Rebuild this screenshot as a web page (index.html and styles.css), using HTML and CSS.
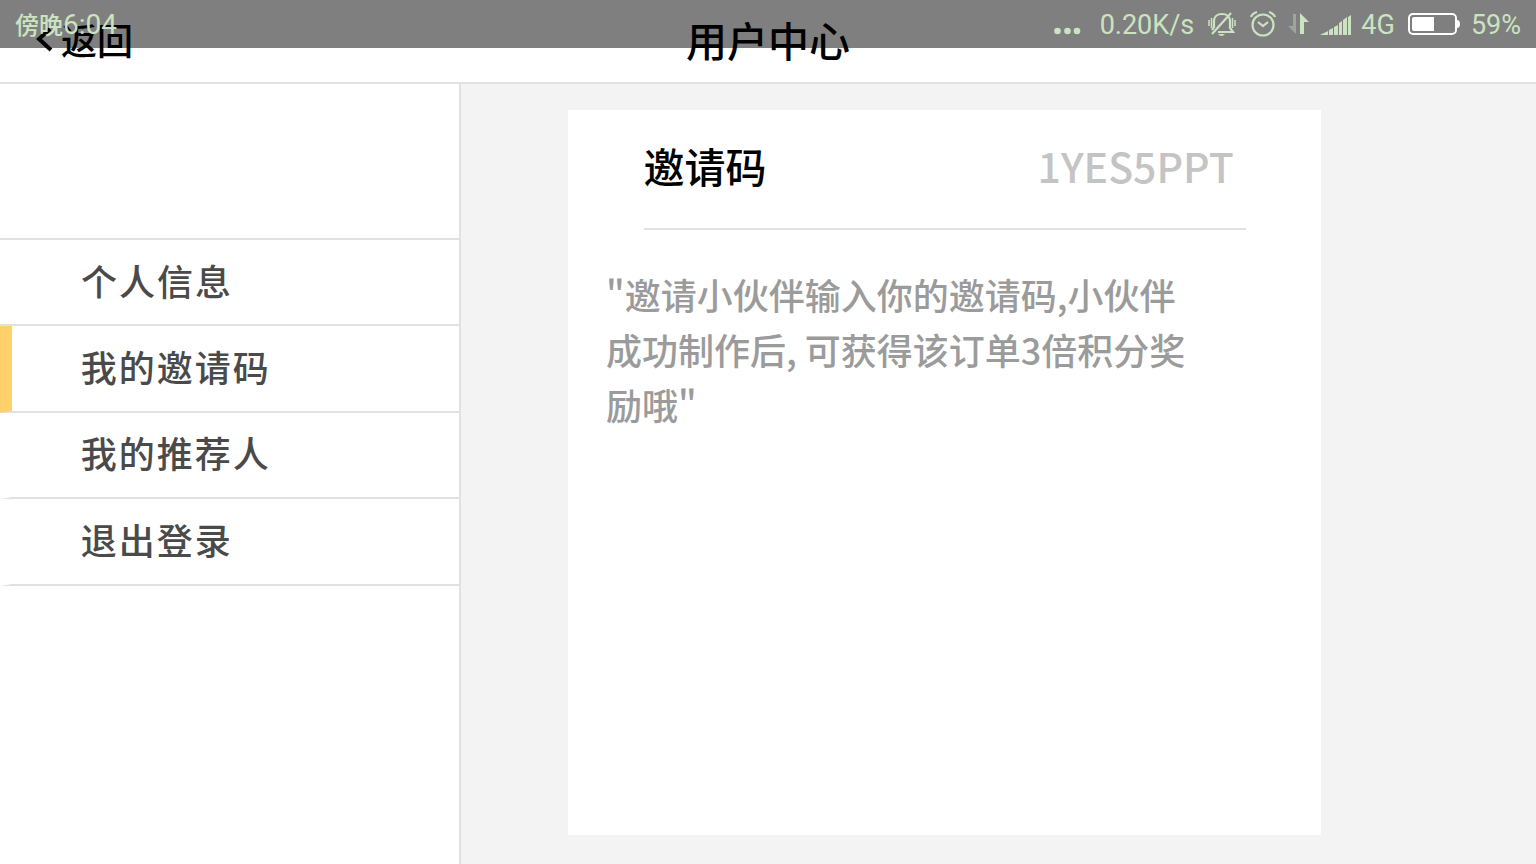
FILE: index.html
```html
<!DOCTYPE html>
<html lang="zh-CN">
<head>
<meta charset="utf-8">
<meta name="viewport" content="width=device-width, initial-scale=1">
<title>用户中心</title>
<link rel="stylesheet" href="styles.css">
</head>
<body class="page">
<div class="status">
  <span class="status-time"><span class="status-period">傍晚</span>6:04</span>
  <div class="status-right">
    <svg class="icon-dots" width="28" height="8" viewBox="0 0 28 8"><circle cx="3.500" cy="4" r="3.300"/><circle cx="13.500" cy="4" r="3.300"/><circle cx="23" cy="4" r="3.300"/></svg>
    <span class="status-speed">0.20K/s</span>
    <svg class="icon-bell" width="28" height="28" viewBox="0 0 28 28" fill="none" stroke="currentColor" stroke-width="2"><path d="M10 22h15l-3-4V11c0-4-3-7-8-7s-8 3-8 7v6l-2 3M4 24L23 3" stroke-width="2.200"/><path d="M1 10v6M3.500 8v10M24.500 8v10M27 10v6" stroke-width="1.500"/><path d="M10 24h7q-3.500 4-7 0z" fill="currentColor" stroke="none"/></svg>
    <svg class="icon-alarm" width="26" height="28" viewBox="0 0 26 28" fill="none" stroke="currentColor" stroke-width="2.200"><circle cx="13" cy="15" r="10.500"/><path d="M8 12l5 4 5-4M1 7c1-3 3-4 6-5M25 7c-1-3-3-4-6-5"/></svg>
    <svg class="icon-data" width="22" height="24" viewBox="0 0 22 24"><path opacity=".4" d="M8 2v20L0 14h5V2z"/><path d="M12 22V1l9 9h-5v12z"/></svg>
    <svg class="icon-signal" width="32" height="22" viewBox="0 0 32 22"><path d="M0 21l8-4v4zM9 16l4-2v7H9zM14 13l4-2v10h-4zM19 9l3-2v14h-3zM23 6l4-3v18h-4zM28 3l3-2v20h-3z"/></svg>
    <span class="status-net">4G</span>
    <svg class="icon-battery" width="54" height="24" viewBox="0 0 54 24"><rect x="1" y="2" width="47" height="20" rx="4" fill="none" stroke="#fff" stroke-width="2"/><path fill="#fff" d="M4 7q0-2 2-2h20v14H6q-2 0-2-2zM49 8q3 0 3 4t-3 4z"/></svg>
    <span class="status-level">59%</span>
  </div>
</div>
<header class="header">
  <button class="back" type="button"><svg width="18" height="26" viewBox="0 0 18 26" fill="none" stroke="currentColor" stroke-width="4"><path d="M15 3L4 13l12 11"/></svg><span>返回</span></button>
  <h1 class="title">用户中心</h1>
</header>
<div class="layout">
  <nav class="sidebar">
    <a class="item" href="#profile">个人信息</a>
    <a class="item item-active" href="#code" aria-current="page">我的邀请码</a>
    <a class="item" href="#referrer">我的推荐人</a>
    <a class="item" href="#logout">退出登录</a>
  </nav>
  <main class="content">
    <section class="card">
      <div class="code-row">
        <h2 class="code-label">邀请码</h2>
        <span class="code-value">1YES5PPT</span>
      </div>
      <p class="note">"邀请小伙伴输入你的邀请码,小伙伴成功制作后, 可获得该订单3倍积分奖励哦"</p>
    </section>
  </main>
</div>
</body>
</html>
```

FILE: styles.css
```css
* { box-sizing: border-box; }

.page {
  margin: 0;
  min-height: 100vh;
  display: flex;
  flex-direction: column;
  background: #f3f3f3;
  color: #000;
  font-family: "Noto Sans CJK SC", sans-serif;
  font-weight: 500;
}

/* System status bar, translucent over the header */
.status {
  position: absolute;
  z-index: 1;
  top: 0;
  left: 0;
  right: 0;
  height: 48px;
  padding: 2px 15px 0 15px;
  display: flex;
  align-items: center;
  justify-content: space-between;
  background: rgba(0, 0, 0, 0.5);
  color: #cbe3c0;
  font-family: Roboto, "Noto Sans CJK SC", sans-serif;
  font-size: 27px;
  font-weight: 400;
  line-height: 46px;
}
.status svg { display: block; flex: none; }
.status svg:not([fill]) { fill: currentColor; }
.status-time { font-size: 28px; }
.status-period { font-size: 24px; font-weight: 500; }
.status-right { display: flex; align-items: center; }
.icon-dots { margin: 12px 18px 0 0; }
.icon-bell { margin: 0 14px 2px; }
.icon-alarm { margin-bottom: 2px; }
.icon-data { margin: 0 0 2px 12px; }
.icon-signal { margin: 0 9px 0 10px; }
.icon-battery { margin: 0 9px 2px 13px; }

.header {
  position: relative;
  display: flex;
  align-items: center;
  justify-content: center;
  height: 84px;
  padding-bottom: 5px;
  border-bottom: 2px solid #e1e1e1;
  background: #fff;
}
.back {
  position: absolute;
  left: 35px;
  display: flex;
  align-items: center;
  gap: 8px;
  padding: 0;
  border: 0;
  background: none;
  color: inherit;
  font: inherit;
  font-size: 36px;
  line-height: 54px;
}
.title {
  margin: 0;
  font-size: 41px;
  font-weight: 500;
  line-height: 60px;
}

.layout { flex: 1; display: flex; }

.sidebar {
  width: 30%;
  padding-top: 154px;
  border-right: 2px solid #e1e1e1;
  background: #fff;
}
.item {
  display: flex;
  align-items: center;
  height: 10vh;
  padding: 0 0 5px 15%;
  border-left: 12px solid #fff;
  border-bottom: 2px solid #e1e1e1;
  color: #4a4a4a;
  font-size: 36px;
  letter-spacing: 2px;
  text-decoration: none;
}
.item:first-child {
  height: calc(10vh + 2px);
  border-left: 0;
  padding-left: 81px;
  border-top: 2px solid #e1e1e1;
}
.item-active { border-left-color: #ffd16a; }

.content { flex: 1; display: flex; padding: 26px 0 29px; }
.card {
  width: 70%;
  margin-left: 10%;
  background: #fff;
}
.code-row {
  display: flex;
  align-items: center;
  justify-content: space-between;
  height: 120px;
  margin: 0 10%;
  padding: 0 12px 8px 0;
  border-bottom: 2px solid #e1e1e1;
}
.code-label {
  margin: 0;
  font-size: 41px;
  font-weight: 500;
}
.code-value { color: #c4c4c4; font-size: 41px; }
.note {
  width: 80%;
  margin: 37px 0 0 5%;
  color: #9b9b9b;
  font-size: 36px;
  line-height: 55px;
}
```
